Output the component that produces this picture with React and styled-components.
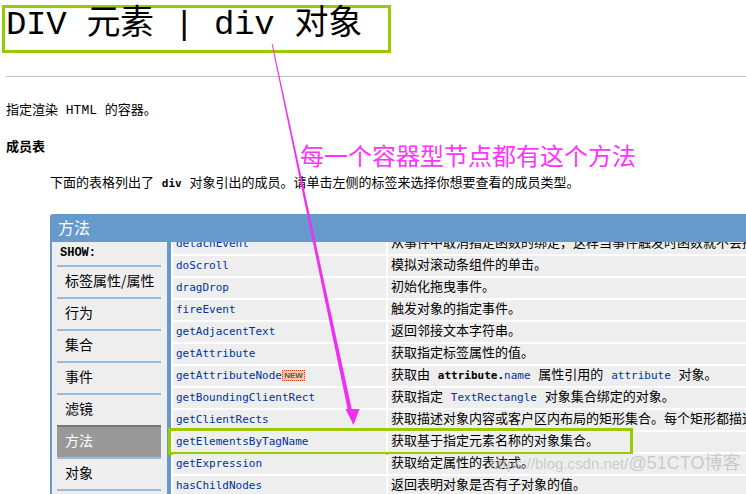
import React from "react";
import styled, { createGlobalStyle } from "styled-components";

const GlobalStyle = createGlobalStyle`
  html, body {
    margin: 0;
    padding: 0;
    background: #ffffff;
    overflow: hidden;
  }
  body {
    font-family: "Liberation Mono", "Noto Sans CJK SC", monospace;
    color: #000000;
  }
`;

const Page = styled.div`
  position: relative;
  width: 746px;
  height: 494px;
  overflow: hidden;
  padding-top: 5px;
  box-sizing: border-box;
`;

const TitleBox = styled.div`
  margin-left: 2px;
  width: 389px;
  height: 48px;
  box-sizing: border-box;
  border: 3px solid #99cc00;
  padding-left: 1px;
  font-size: 34px;
  line-height: 35px;
  letter-spacing: -0.3px;
  white-space: nowrap;
`;

const Rule = styled.div`
  margin: 23px 0 0 6px;
  border-top: 1px solid #c0c0c0;
`;

const Para = styled.p`
  margin: ${(p) => p.$top}px 0 0 ${(p) => p.$indent}px;
  font-size: 13px;
  line-height: 20px;
  font-weight: ${(p) => (p.$bold ? 700 : 400)};
  white-space: nowrap;
`;

const Mono = styled.span`
  font-family: "DejaVu Sans Mono", monospace;
  font-size: 11px;
  font-weight: ${(p) => (p.$bold ? 700 : 400)};
  color: ${(p) => (p.$link ? "#003399" : "#000000")};
`;

const Table = styled.div`
  margin: 20px 0 0 50px;
  width: 696px;
`;

const Header = styled.div`
  height: 28px;
  background: #6699cc;
  border-radius: 3px 0 0 0;
  color: #ffffff;
  font-family: "Noto Sans CJK SC", sans-serif;
  font-size: 16px;
  line-height: 27px;
  padding-left: 8px;
`;

const Body = styled.div`
  display: flex;
  height: 260px;
  overflow: hidden;
`;

const Sidebar = styled.div`
  flex: none;
  width: 104px;
  padding: 0 6px 0 5px;
  background: #eeeeee;
  border-left: 2px solid #6699cc;
  border-right: 4px solid #6699cc;
`;

const ShowLabel = styled.div`
  height: 23px;
  line-height: 23px;
  padding-left: 3px;
  font-family: "Liberation Mono", monospace;
  font-weight: 700;
  font-size: 12px;
`;

const NavItem = styled.div`
  height: 30px;
  line-height: 26px;
  padding-left: 8px;
  border-top: 2px solid ${(p) => (p.$active ? "#777777" : "#99bbdd")};
  background: ${(p) => (p.$active ? "#999999" : "transparent")};
  color: ${(p) => (p.$active ? "#ffffff" : "#000000")};
  font-family: "Noto Sans CJK SC", sans-serif;
  font-size: 14px;
`;

const Content = styled.div`
  flex: 1;
  min-width: 0;
  padding-left: 2px;
`;

const List = styled.div`
  display: flex;
  flex-direction: column;
  gap: 2px;
  margin-top: -8px;
`;

const Row = styled.div`
  position: relative;
  display: flex;
  height: 20px;

  ${(p) =>
    p.$marked &&
    `
    &::after {
      content: "";
      position: absolute;
      left: -5px;
      top: -4px;
      width: 465px;
      height: 27px;
      box-sizing: border-box;
      border: 3px solid #99cc00;
    }
  `}
`;

const NameCell = styled.div`
  flex: none;
  width: 210px;
  padding-left: 3px;
  background: #eeeeee;
  font-family: "DejaVu Sans Mono", monospace;
  font-size: 11px;
  line-height: 20px;
  color: #003399;
  white-space: nowrap;
`;

const DescCell = styled.div`
  flex: 1;
  min-width: 0;
  margin-left: 2px;
  padding-left: 3px;
  background: #eeeeee;
  font-size: 13px;
  line-height: 20px;
  white-space: nowrap;
  overflow: hidden;
`;

const NewBadge = styled.span`
  display: inline-block;
  vertical-align: middle;
  margin-top: -2px;
  width: 21px;
  height: 9px;
  border: 1px dotted #ff3300;
  background: #ffc9a8;
  color: #555555;
  font-family: "Liberation Sans", sans-serif;
  font-size: 8px;
  font-weight: 700;
  line-height: 9px;
  text-align: center;
`;

const Note = styled.div`
  position: absolute;
  left: 300px;
  top: 140px;
  color: #ff33ff;
  font-family: "Noto Sans CJK SC", sans-serif;
  font-size: 24px;
  line-height: 30px;
  white-space: nowrap;
`;

const Arrow = styled.svg`
  position: absolute;
  left: 0;
  top: 0;
  pointer-events: none;
`;

const Watermark = styled.div`
  position: absolute;
  left: 490px;
  top: 452px;
  color: rgba(190, 190, 190, 0.75);
  font-family: "Liberation Sans", "Noto Sans CJK SC", sans-serif;
  font-size: 15px;
  line-height: 22px;
  white-space: nowrap;
  pointer-events: none;
`;

const WatermarkBig = styled.span`
  font-size: 18px;
`;

const navItems = ["标签属性/属性", "行为", "集合", "事件", "滤镜", "方法", "对象", ""];

const rows = [
  { name: "detachEvent", desc: "从事件中取消指定函数的绑定，这样当事件触发时函数就不会接收到事件。" },
  { name: "doScroll", desc: "模拟对滚动条组件的单击。" },
  { name: "dragDrop", desc: "初始化拖曳事件。" },
  { name: "fireEvent", desc: "触发对象的指定事件。" },
  { name: "getAdjacentText", desc: "返回邻接文本字符串。" },
  { name: "getAttribute", desc: "获取指定标签属性的值。" },
  {
    name: "getAttributeNode",
    isNew: true,
    desc: (
      <>
        获取由 <Mono $bold>attribute.</Mono>
        <Mono $link>name</Mono> 属性引用的 <Mono $link>attribute</Mono> 对象。
      </>
    ),
  },
  {
    name: "getBoundingClientRect",
    desc: (
      <>
        获取指定 <Mono $link>TextRectangle</Mono> 对象集合绑定的对象。
      </>
    ),
  },
  { name: "getClientRects", desc: "获取描述对象内容或客户区内布局的矩形集合。每个矩形都描述了一个区域。" },
  { name: "getElementsByTagName", desc: "获取基于指定元素名称的对象集合。", marked: true },
  { name: "getExpression", desc: "获取给定属性的表达式。" },
  { name: "hasChildNodes", desc: "返回表明对象是否有子对象的值。" },
];

export default function App() {
  return (
    <Page>
      <GlobalStyle />
      <TitleBox>DIV 元素 | div 对象</TitleBox>
      <Rule />
      <Para $top={24} $indent={6}>
        指定渲染 HTML 的容器。
      </Para>
      <Para $top={17} $indent={6} $bold>
        成员表
      </Para>
      <Para $top={16} $indent={50}>
        下面的表格列出了 <Mono $bold>div</Mono> 对象引出的成员。请单击左侧的标签来选择你想要查看的成员类型。
      </Para>

      <Table>
        <Header>方法</Header>
        <Body>
          <Sidebar>
            <ShowLabel>SHOW:</ShowLabel>
            {navItems.map((item, i) => (
              <NavItem key={i} $active={item === "方法"}>
                {item}
              </NavItem>
            ))}
          </Sidebar>
          <Content>
            <List>
              {rows.map((r) => (
                <Row key={r.name} $marked={r.marked}>
                  <NameCell>
                    {r.name}
                    {r.isNew && <NewBadge>NEW</NewBadge>}
                  </NameCell>
                  <DescCell>{r.desc}</DescCell>
                </Row>
              ))}
            </List>
          </Content>
        </Body>
      </Table>

      <Note>每一个容器型节点都有这个方法</Note>
      <Arrow width="746" height="494" viewBox="0 0 746 494">
        <polygon points="271.6,44 272.6,44 352.4,412 348.2,412" fill="#f030f0" />
        <polygon points="345.5,409 359.5,409 353.5,425" fill="#f030f0" />
      </Arrow>
      <Watermark>
        https://blog.csdn.net/<WatermarkBig>@51CTO博客</WatermarkBig>
      </Watermark>
    </Page>
  );
}
